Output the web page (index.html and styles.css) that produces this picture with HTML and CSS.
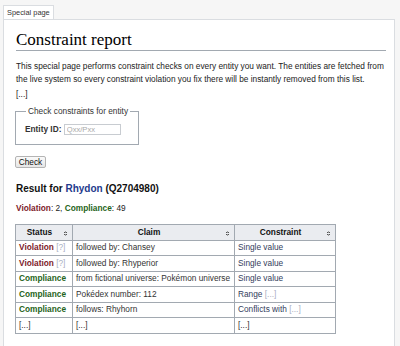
FILE: index.html
```html
<!DOCTYPE html>
<html lang="en">
    <head>
        <meta charset="UTF-8" />
        <title>Constraint report</title>
        <link rel="stylesheet" href="styles.css">
    </head>

    <body>
        <!-- 标签 -->
        <div class="tabs">
            <span class="tab">Special page</span>
        </div>
        <!-- 内容 -->
        <div class="content">
            <h1>Constraint report</h1>
            <p>This special page performs constraint checks on every entity you want. The entities are fetched from the live system so every constraint violation you fix there will be instantly removed from this list.</p>
            <p>[...]</p>
            <form class="check-form">
                <fieldset>
                    <legend>Check constraints for entity</legend>
                    <label for="entity">Entity ID:</label>
                    <input id="entity" type="text" placeholder="Qxx/Pxx" />
                </fieldset>
                <button type="button">Check</button>
            </form>

            <h3 class="result">Result for <a href="#">Rhydon</a> (Q2704980)</h3>
            <p class="summary"><span class="violation">Violation</span>: 2, <span class="compliance">Compliance</span>: 49</p>

            <table class="wikitable">
                <thead>
                    <tr>
                        <th class="col-status">Status <i class="sort"></i></th>
                        <th class="col-claim">Claim <i class="sort"></i></th>
                        <th class="col-constraint">Constraint <i class="sort"></i></th>
                    </tr>
                </thead>
                <tbody>
                    <tr>
                        <td><span class="violation">Violation</span> <span class="muted">[?]</span></td>
                        <td>followed by: Chansey</td>
                        <td class="link">Single value</td>
                    </tr>
                    <tr>
                        <td><span class="violation">Violation</span> <span class="muted">[?]</span></td>
                        <td>followed by: Rhyperior</td>
                        <td class="link">Single value</td>
                    </tr>
                    <tr>
                        <td><span class="compliance">Compliance</span></td>
                        <td>from fictional universe: Pokémon universe</td>
                        <td class="link">Single value</td>
                    </tr>
                    <tr>
                        <td><span class="compliance">Compliance</span></td>
                        <td>Pokédex number: 112</td>
                        <td class="link">Range <span class="muted">[...]</span></td>
                    </tr>
                    <tr>
                        <td><span class="compliance">Compliance</span></td>
                        <td>follows: Rhyhorn</td>
                        <td class="link">Conflicts with <span class="muted">[...]</span></td>
                    </tr>
                    <tr>
                        <td>[...]</td>
                        <td>[...]</td>
                        <td>[...]</td>
                    </tr>
                </tbody>
            </table>
        </div>
    </body>
</html>
```

FILE: styles.css
```css
* {
    box-sizing: border-box;
}
body {
    margin: 0;
    background: #f6f6f6;
    font-family: "Liberation Sans", Arial, sans-serif;
    color: #222;
}
/* 标签 */
.tabs {
    display: flex;
    padding: 5px 0 0 3px;
}
.tab {
    background: #fff;
    border: 1px solid #dadde1;
    border-bottom: none;
    padding: 0 3px;
    font-size: 7.4px;
    line-height: 13px;
    color: #333;
}
/* 内容 */
.content {
    margin: 0 5px 0 3px;
    background: #fff;
    border: 1px solid #dadde1;
    padding: 10px 8px 13px 12px;
}
h1 {
    margin: 0 0 9px;
    font-family: "Liberation Serif", "DejaVu Serif", serif;
    font-size: 17px;
    font-weight: normal;
    line-height: 20px;
    color: #000;
    border-bottom: 1px solid #a2a9b1;
}
p {
    margin: 0 0 2px;
    font-size: 8.3px;
    line-height: 13px;
}
.check-form {
    margin-top: 5px;
}
fieldset {
    width: 124px;
    margin: 0 0 0 -1px;
    padding: 7px 8px 9px 9px;
    border: 1px solid #a2a9b1;
    font-size: 8.3px;
    white-space: nowrap;
}
legend {
    margin-left: 1px;
    padding: 0 2px;
    line-height: 11px;
    color: #333;
}
label {
    font-weight: bold;
    color: #333;
}
input {
    width: 57px;
    height: 11px;
    margin: 0;
    padding: 0 2px;
    border: 1px solid #c8ccd1;
    font-family: inherit;
    font-size: 7.6px;
    vertical-align: middle;
}
input::placeholder {
    color: #aaa;
}
button {
    display: block;
    margin: 11px 0 0 -1px;
    width: 31px;
    height: 12px;
    padding: 0;
    background: linear-gradient(#fafafa, #e6e6e6);
    border: 1px solid #b4b4b4;
    border-radius: 2px;
    font-family: inherit;
    font-size: 8.3px;
    line-height: 10px;
    color: #111;
}
/* 结果 */
.result {
    margin: 14px 0 0;
    font-size: 10px;
    line-height: 13px;
    color: #111;
}
.result a {
    color: #233a8c;
    text-decoration: none;
}
.summary {
    margin: 7px 0 0;
}
.violation {
    color: #7e1b2a;
    font-weight: bold;
}
.compliance {
    color: #1f6420;
    font-weight: bold;
}
.muted {
    color: #a9afc2;
}
.wikitable {
    margin: 9px 0 0 -1px;
    border-collapse: collapse;
    border: 1px solid #a2a9b1;
    font-size: 8.3px;
    color: #333;
}
.wikitable th,
.wikitable td {
    border: 1px solid #a2a9b1;
    padding: 1.5px 3px;
    line-height: 11.5px;
    text-align: left;
    white-space: nowrap;
}
.wikitable th {
    position: relative;
    background: #eaecf0;
    text-align: center;
    color: #111;
    padding-right: 12px;
}
.col-status {
    width: 57px;
}
.col-claim {
    width: 162px;
}
.col-constraint {
    width: 101px;
}
.link {
    color: #34405c;
}
.sort {
    position: absolute;
    right: 5px;
    top: 50%;
    width: 3px;
    height: 5px;
    margin-top: -2px;
    background:
        linear-gradient(to bottom right, transparent 50%, #555 50%) 0 0 / 1.5px 2px no-repeat,
        linear-gradient(to bottom left, transparent 50%, #555 50%) 1.5px 0 / 1.5px 2px no-repeat,
        linear-gradient(to top right, transparent 50%, #555 50%) 0 3px / 1.5px 2px no-repeat,
        linear-gradient(to top left, transparent 50%, #555 50%) 1.5px 3px / 1.5px 2px no-repeat;
}
```
